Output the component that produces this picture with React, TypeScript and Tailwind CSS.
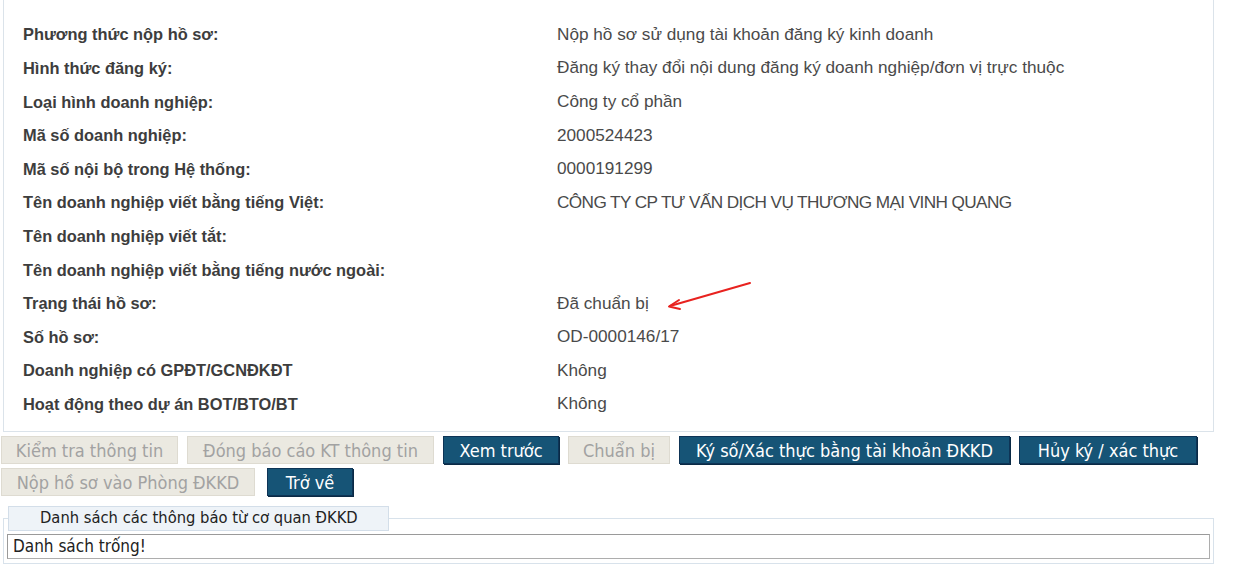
import React from "react";

const rows: [string, string][] = [
  ["Phương thức nộp hồ sơ:", "Nộp hồ sơ sử dụng tài khoản đăng ký kinh doanh"],
  ["Hình thức đăng ký:", "Đăng ký thay đổi nội dung đăng ký doanh nghiệp/đơn vị trực thuộc"],
  ["Loại hình doanh nghiệp:", "Công ty cổ phần"],
  ["Mã số doanh nghiệp:", "2000524423"],
  ["Mã số nội bộ trong Hệ thống:", "0000191299"],
  ["Tên doanh nghiệp viết bằng tiếng Việt:", "CÔNG TY CP TƯ VẤN DỊCH VỤ THƯƠNG MẠI VINH QUANG"],
  ["Tên doanh nghiệp viết tắt:", ""],
  ["Tên doanh nghiệp viết bằng tiếng nước ngoài:", ""],
  ["Trạng thái hồ sơ:", "Đã chuẩn bị"],
  ["Số hồ sơ:", "OD-0000146/17"],
  ["Doanh nghiệp có GPĐT/GCNĐKĐT", "Không"],
  ["Hoạt động theo dự án BOT/BTO/BT", "Không"],
];

function Btn({ label, active, w }: { label: string; active?: boolean; w: string }) {
  return (
    <div
      className={
        `${w} h-[28px] flex items-center justify-center text-[18px] font-['DejaVu_Sans_Condensed','Liberation_Sans',sans-serif] [font-stretch:condensed] ` +
        (active
          ? "bg-[#165476] text-white border border-[#0e3456] shadow-[1px_1px_0_#0a2a45]"
          : "bg-[#ebe9e1] text-[#a2a2a2] border border-[#dedbd1]")
      }
    >
      {label}
    </div>
  );
}

export default function App() {
  return (
    <div className="w-[1237px] h-[576px] bg-white overflow-hidden font-['Liberation_Sans',Arial,sans-serif]">
      <div className="relative ml-[3px] w-[1211px] border border-t-0 border-[#dbe3ea] pt-[18px] pb-[10px] pl-[19px]">
        {rows.map(([l, v], i) => (
          <div key={i} className="flex items-center h-[33.6px]">
            <div className="w-[534px] text-[16.4px] font-bold text-[#3d3d3d]">{l}</div>
            <div className="text-[17.2px] text-[#4a4a4a]">
              {i === 5 ? <span className="tracking-[-0.6px]">{v}</span> : v}
            </div>
          </div>
        ))}
        <svg className="absolute left-[655px] top-[276px]" width="100" height="40" viewBox="0 0 100 40">
          <line x1="91" y1="7" x2="11" y2="30" stroke="#e8221f" strokeWidth="2" strokeLinecap="round" />
          <polyline points="20,24 10,30.5 21,33" fill="none" stroke="#e8221f" strokeWidth="2" strokeLinecap="round" strokeLinejoin="round" />
        </svg>
      </div>

      <div className="flex flex-col gap-[4px] mt-[4px] ml-[1px]">
        <div className="flex gap-[9px]">
          <Btn label="Kiểm tra thông tin" w="w-[177px]" />
          <Btn label="Đóng báo cáo KT thông tin" w="w-[247px]" />
          <Btn label="Xem trước" w="w-[116px]" active />
          <Btn label="Chuẩn bị" w="w-[102px]" />
          <Btn label="Ký số/Xác thực bằng tài khoản ĐKKD" w="w-[331px]" active />
          <Btn label="Hủy ký / xác thực" w="w-[178px]" active />
        </div>
        <div className="flex gap-[12px]">
          <Btn label="Nộp hồ sơ vào Phòng ĐKKD" w="w-[254px]" />
          <Btn label="Trở về" w="w-[86px]" active />
        </div>
      </div>

      <div className="relative mt-[10px] ml-[3px] w-[1211px]">
        <div className="relative z-10 ml-[5px] w-[381px] h-[25px] bg-[#eef3f8] border border-[#d3dee9] flex items-center pl-[31px] text-[16.4px] text-[#222] font-['DejaVu_Sans_Condensed','Liberation_Sans',sans-serif] [font-stretch:condensed]">
          Danh sách các thông báo từ cơ quan ĐKKD
        </div>
        <div className="-mt-[13px] border border-[#d8e2eb] pt-[15px] pb-[3px] px-[3px] h-[46px]">
          <div className="h-[25px] border border-[#adadad] border-t-[#9a9a9a] border-l-[#9a9a9a] flex items-center pl-[5px] text-[17px] text-[#222] font-['DejaVu_Sans_Condensed','Liberation_Sans',sans-serif] [font-stretch:condensed]">
            Danh sách trống!
          </div>
        </div>
      </div>
    </div>
  );
}
